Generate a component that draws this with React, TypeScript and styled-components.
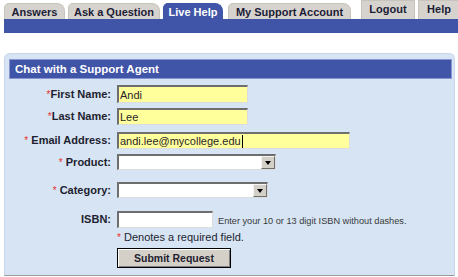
import styled, { createGlobalStyle } from "styled-components";

const GlobalStyle = createGlobalStyle`
  html, body {
    margin: 0;
    padding: 0;
    background: #ffffff;
  }
  body {
    font-family: "Liberation Sans", Arial, sans-serif;
    width: 458px;
    height: 277px;
    overflow: hidden;
  }
`;

const Page = styled.div`
  width: 458px;
  height: 277px;
  overflow: hidden;
`;

const TabBar = styled.div`
  display: flex;
  align-items: flex-end;
  height: 19px;
  padding-left: 4px;
`;

const Tab = styled.div<{ $w: number; $ml?: number; $active?: boolean; $square?: boolean }>`
  box-sizing: border-box;
  flex: none;
  width: ${(p) => p.$w}px;
  margin-left: ${(p) => p.$ml ?? 0}px;
  height: ${(p) => (p.$square ? 19 : 16)}px;
  border-radius: ${(p) => (p.$square ? "0" : "5px 8px 0 0")};
  background: ${(p) => (p.$active ? "#4054a8" : "#d6d3ce")};
  border: 1px solid ${(p) => (p.$active ? "#4054a8" : "#c8c4bc")};
  border-bottom: none;
  color: ${(p) => (p.$active ? "#ffffff" : "#1c1c36")};
  font-size: 11px;
  font-weight: bold;
  display: flex;
  align-items: center;
  justify-content: center;
  padding-bottom: ${(p) => (p.$square ? 3 : 0)}px;
  white-space: nowrap;
`;

const BlueBar = styled.div`
  margin-left: 4px;
  height: 14px;
  background: #4054a8;
`;

const Panel = styled.div`
  box-sizing: border-box;
  margin: 20px 0 0 4px;
  width: 451px;
  height: 223px;
  background: #d6e4f3;
  border: 1px solid #c6d6ec;
  border-bottom: 1px solid #9a9a9a;
  border-radius: 6px 6px 0 0;
  padding: 5px 2px 0 4px;
`;

const PanelHeader = styled.div`
  box-sizing: border-box;
  height: 20px;
  background: #4054a8;
  border: 1px solid #8796d2;
  color: #ffffff;
  font-size: 11.5px;
  font-weight: bold;
  line-height: 18px;
  padding-left: 5px;
`;

const Form = styled.div`
  margin-top: 6px;
`;

const Row = styled.div<{ $h: number }>`
  display: grid;
  grid-template-columns: 102px 1fr;
  column-gap: 6px;
  align-items: start;
  height: ${(p) => p.$h}px;
`;

const Label = styled.div<{ $h: number }>`
  text-align: right;
  font-size: 11px;
  font-weight: bold;
  color: #1e1e30;
  line-height: ${(p) => p.$h}px;
  white-space: nowrap;
`;

const Req = styled.span`
  color: #e8302c;
  font-weight: normal;
  font-size: 10px;
`;

const Field = styled.div`
  display: flex;
  align-items: center;
`;

const TextBox = styled.div<{ $w: number; $h: number; $filled?: boolean }>`
  box-sizing: border-box;
  width: ${(p) => p.$w}px;
  height: ${(p) => p.$h}px;
  background: ${(p) => (p.$filled ? "#ffff9c" : "#ffffff")};
  border-top: 2px solid #6e6e6e;
  border-left: 2px solid #6e6e6e;
  border-right: 1px solid #dcdcdc;
  border-bottom: 1px solid #dcdcdc;
  font-size: 11px;
  color: #2a1e2a;
  padding-left: 1px;
  display: flex;
  align-items: center;
  white-space: nowrap;
  overflow: hidden;
`;

const Caret = styled.span`
  display: inline-block;
  width: 1px;
  height: 13px;
  background: #000000;
  margin-left: 1px;
`;

const SelectBox = styled.div<{ $w: number }>`
  box-sizing: border-box;
  width: ${(p) => p.$w}px;
  height: 16px;
  background: #ffffff;
  border-top: 2px solid #6e6e6e;
  border-left: 2px solid #6e6e6e;
  border-right: 1px solid #dcdcdc;
  border-bottom: 1px solid #dcdcdc;
  display: flex;
  justify-content: flex-end;
`;

const DropButton = styled.div`
  box-sizing: border-box;
  width: 14px;
  height: 13px;
  background: #d4d0c8;
  border-top: 1px solid #f4f4f4;
  border-left: 1px solid #f4f4f4;
  border-right: 1px solid #6e6e6e;
  border-bottom: 1px solid #6e6e6e;
  display: flex;
  align-items: center;
  justify-content: center;

  &::after {
    content: "";
    border-left: 3.5px solid transparent;
    border-right: 3.5px solid transparent;
    border-top: 4px solid #000000;
  }
`;

const Hint = styled.span`
  margin: 3px 0 0 5px;
  font-size: 9.2px;
  color: #3a3a3a;
  white-space: nowrap;
`;

const Note = styled.div`
  font-size: 11px;
  color: #1e1e30;
  white-space: nowrap;
`;

const SubmitButton = styled.button`
  box-sizing: border-box;
  width: 114px;
  height: 20px;
  margin-top: 2px;
  padding: 0;
  background: #d4d0c8;
  border: 1px solid #000000;
  box-shadow: inset 1px 1px 0 #ffffff, inset -1px -1px 0 #808080;
  font-family: "Liberation Sans", Arial, sans-serif;
  font-size: 10.5px;
  font-weight: bold;
  color: #1e1e30;
`;

export default function App() {
  return (
    <Page>
      <GlobalStyle />
      <TabBar>
        <Tab $w={61}>Answers</Tab>
        <Tab $w={92} $ml={3}>Ask a Question</Tab>
        <Tab $w={60} $ml={3} $active>Live Help</Tab>
        <Tab $w={123} $ml={5}>My Support Account</Tab>
        <Tab $w={54} $ml={10} $square>Logout</Tab>
        <Tab $w={42} $ml={3} $square>Help</Tab>
      </TabBar>
      <BlueBar />
      <Panel>
        <PanelHeader>Chat with a Support Agent</PanelHeader>
        <Form>
          <Row $h={23}>
            <Label $h={18}><Req>*</Req>First Name:</Label>
            <Field><TextBox $w={131} $h={18} $filled>Andi</TextBox></Field>
          </Row>
          <Row $h={24}>
            <Label $h={17}><Req>*</Req>Last Name:</Label>
            <Field><TextBox $w={131} $h={17} $filled>Lee</TextBox></Field>
          </Row>
          <Row $h={22}>
            <Label $h={17}><Req>*</Req> Email Address:</Label>
            <Field>
              <TextBox $w={233} $h={17} $filled>
                andi.lee@mycollege.edu<Caret />
              </TextBox>
            </Field>
          </Row>
          <Row $h={28}>
            <Label $h={16}><Req>*</Req> Product:</Label>
            <Field><SelectBox $w={159}><DropButton /></SelectBox></Field>
          </Row>
          <Row $h={29}>
            <Label $h={16}><Req>*</Req> Category:</Label>
            <Field><SelectBox $w={151}><DropButton /></SelectBox></Field>
          </Row>
          <Row $h={20}>
            <Label $h={17}>ISBN:</Label>
            <Field>
              <TextBox $w={96} $h={17} />
              <Hint>Enter your 10 or 13 digit ISBN without dashes.</Hint>
            </Field>
          </Row>
          <Row $h={15}>
            <span />
            <Note><Req>*</Req> Denotes a required field.</Note>
          </Row>
          <Row $h={24}>
            <span />
            <Field><SubmitButton>Submit Request</SubmitButton></Field>
          </Row>
        </Form>
      </Panel>
    </Page>
  );
}
